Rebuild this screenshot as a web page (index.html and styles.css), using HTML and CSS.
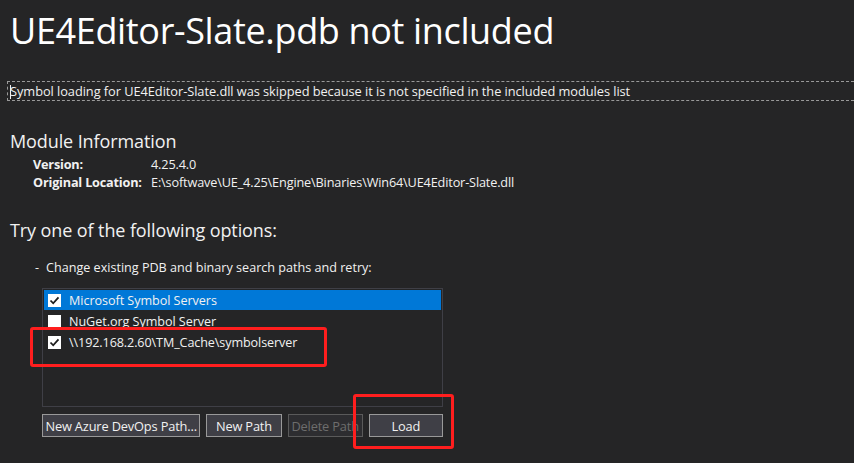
FILE: index.html
```html
<!DOCTYPE html>
<html>
<head>
<meta charset="utf-8">
<link rel="stylesheet" href="styles.css">
</head>
<body>
<div class="page">
  <h1 class="title">UE4Editor-Slate.pdb not included</h1>
  <div class="notice"><span class="caret"></span>Symbol loading for UE4Editor-Slate.dll was skipped because it is not specified in the included modules list</div>

  <h2 class="section">Module Information</h2>
  <div class="info">
    <div class="info-row"><span class="label">Version:</span><span class="value">4.25.4.0</span></div>
    <div class="info-row"><span class="label">Original Location:</span><span class="value">E:\softwave\UE_4.25\Engine\Binaries\Win64\UE4Editor-Slate.dll</span></div>
  </div>

  <h2 class="section options-title">Try one of the following options:</h2>
  <div class="option"><span class="dash">-</span>Change existing PDB and binary search paths and retry:</div>

  <div class="paths">
    <div class="list">
      <div class="item selected"><span class="check on"><svg viewBox="0 0 13 13" width="13" height="13"><path d="M2.5 6.5 L5.2 9.3 L10.5 3.4" fill="none" stroke="#1e1e1e" stroke-width="1.8"/></svg></span>Microsoft Symbol Servers</div>
      <div class="item"><span class="check"></span>NuGet.org Symbol Server</div>
      <div class="item"><span class="check on"><svg viewBox="0 0 13 13" width="13" height="13"><path d="M2.5 6.5 L5.2 9.3 L10.5 3.4" fill="none" stroke="#1e1e1e" stroke-width="1.8"/></svg></span><span class="unc">\\192.168.2.60\TM_Cache\symbolserver</span></div>
    </div>
    <div class="buttons">
      <button class="btn b1">New Azure DevOps Path...</button>
      <button class="btn b2">New Path</button>
      <button class="btn b3 disabled">Delete Path</button>
      <button class="btn b4">Load</button>
    </div>
    <div class="mark mark-1"></div>
    <div class="mark mark-2"></div>
  </div>
</div>
</body>
</html>
```
FILE: styles.css
```css
html, body {
  margin: 0;
  padding: 0;
  background: #252526;
  overflow: hidden;
}
body {
  width: 854px;
  height: 463px;
  color: #f1f1f1;
  font-family: "Open Sans", "Noto Sans", sans-serif;
}
.page {
  padding: 0 0 0 10px;
}
.title {
  margin: 0;
  padding-top: 7px;
  font-size: 36px;
  font-weight: 400;
  line-height: 48px;
  letter-spacing: -0.35px;
  color: #ffffff;
}
.notice {
  margin: 26px 0 0 -3px;
  height: 18px;
  border: 1px dashed #9a9a9a;
  border-right: none;
  font-size: 12.8px;
  line-height: 18px;
  padding-left: 2px;
  letter-spacing: -0.05px;
  white-space: nowrap;
}
.caret {
  display: inline-block;
  width: 1px;
  height: 14px;
  background: #f1f1f1;
  vertical-align: -3px;
  margin-right: -1px;
}
.section {
  margin: 0;
  font-size: 18px;
  font-weight: 400;
  line-height: 24px;
  letter-spacing: -0.1px;
}
.notice + .section {
  margin-top: 28px;
}
.info {
  padding-top: 2px;
  padding-left: 23px;
  font-size: 12.7px;
  line-height: 18px;
}
.info-row {
  display: flex;
}
.label {
  width: 118px;
  font-weight: 700;
  letter-spacing: -0.2px;
}
.value {
  letter-spacing: -0.15px;
}
.options-title {
  margin-top: 27px;
}
.option {
  margin: 18px 0 0 25px;
  font-size: 12.6px;
  line-height: 16px;
  letter-spacing: 0;
}
.dash {
  display: inline-block;
  width: 11px;
}
.paths {
  position: relative;
  margin: 12px 0 0 32px;
  width: 401px;
}
.list {
  height: 115px;
  border: 1px solid #3f3f46;
  padding: 1px;
}
.item {
  display: flex;
  align-items: center;
  height: 21px;
  font-size: 12.6px;
  letter-spacing: -0.05px;
  padding-left: 4px;
  color: #f1f1f1;
}
.unc {
  letter-spacing: -0.1px;
}
.item.selected {
  background: #0078d7;
  height: 20px;
  margin-bottom: 1px;
}
.check {
  width: 13px;
  height: 13px;
  background: #ffffff;
  margin-right: 8px;
  flex: none;
}
.check svg {
  display: block;
}
.buttons {
  display: flex;
  gap: 6px;
  margin-top: 7px;
}
.btn {
  height: 23px;
  padding: 0;
  background: #3f3f46;
  border: 1px solid #999999;
  color: #f1f1f1;
  font-family: "Open Sans", "Noto Sans", sans-serif;
  font-size: 12.8px;
  letter-spacing: -0.15px;
  white-space: nowrap;
  overflow: hidden;
}
.b1 { width: 160px; }
.b2 { width: 76px; }
.b3 { width: 76px; }
.b4 { width: 75px; }
.btn.disabled {
  background: #2d2d30;
  border-color: #5a5a5a;
  color: #6d6d6d;
}
.mark {
  position: absolute;
  border: 3px solid #ff1e1e;
  border-radius: 3px;
  box-sizing: border-box;
}
.mark-1 {
  left: -12px;
  top: 39px;
  width: 297px;
  height: 40px;
}
.mark-2 {
  left: 311px;
  top: 106px;
  width: 101px;
  height: 55px;
}
```
